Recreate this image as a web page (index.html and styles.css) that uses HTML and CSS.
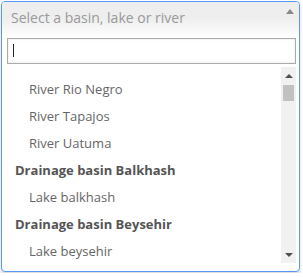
FILE: index.html
```html
<!DOCTYPE html>
<html lang="en">
<head>
    <meta charset="UTF-8">
    <title>Basin select</title>
    <link rel="stylesheet" href="styles.css">
</head>
<body>
    <div class="select">
        <div class="choice">
            <span class="placeholder">Select a basin, lake or river</span>
            <span class="arrow"></span>
        </div>

        <div class="search">
            <input type="text">
            <span class="caret"></span>
        </div>

        <div class="results">
            <ul class="list">
                <li class="item">River Rio Negro</li>
                <li class="item">River Tapajos</li>
                <li class="item">River Uatuma</li>
                <li class="group">Drainage basin Balkhash</li>
                <li class="item">Lake balkhash</li>
                <li class="group">Drainage basin Beysehir</li>
                <li class="item">Lake beysehir</li>
            </ul>

            <div class="scrollbar">
                <span class="btn up"></span>
                <div class="track"><div class="thumb"></div></div>
                <span class="btn down"></span>
            </div>
        </div>
    </div>
</body>
</html>
```

FILE: styles.css
```css
body {
    margin: 0;
    padding: 1px;
    font-family: "Open Sans", Arial, sans-serif;
    background: #fff;
}

.select {
    width: 299px;
    height: 271px;
    box-sizing: border-box;
    border: 1px solid #5897fb;
    border-radius: 4px;
    box-shadow: 0 3px 4px rgba(0, 0, 0, 0.15);
    background: #fff;
    overflow: hidden;
}

.choice {
    display: flex;
    align-items: center;
    justify-content: space-between;
    height: 36px;
    padding: 0 5px 6px 9px;
    box-sizing: border-box;
    background: linear-gradient(to bottom, #eee 0%, #eee 45%, #fff 100%);
}

.placeholder {
    font-size: 14px;
    color: #999;
}

.arrow {
    width: 0;
    height: 0;
    margin-top: -12px;
    border-left: 4px solid transparent;
    border-right: 4px solid transparent;
    border-bottom: 5px solid #888;
}

.search {
    position: relative;
    padding: 0 3px 0 5px;
}

.search input {
    display: block;
    width: 100%;
    height: 26px;
    box-sizing: border-box;
    margin: 0;
    border: 1px solid #aaa;
    border-radius: 0;
    outline: none;
    padding: 0 6px;
    font-family: inherit;
    font-size: 13px;
    background: #fff;
    box-shadow: inset 0 0 2px rgba(0, 0, 0, 0.15);
}

.caret {
    position: absolute;
    left: 11px;
    top: 6px;
    width: 1px;
    height: 13px;
    background: #222;
}

.results {
    display: flex;
    height: 196px;
    margin: 3px 3px 0 0;
    padding-left: 4px;
    overflow: hidden;
}

.list {
    flex: 1;
    margin: 0;
    padding: 9px 0 0;
    list-style: none;
    font-size: 13px;
}

.list li {
    height: 27px;
    line-height: 27px;
    white-space: nowrap;
}

.item {
    padding-left: 23px;
    color: #666;
}

.group {
    padding-left: 9px;
    font-weight: 700;
    color: #555;
}

.scrollbar {
    display: flex;
    flex-direction: column;
    width: 15px;
    background: #f1f1f1;
}

.btn {
    display: flex;
    align-items: center;
    justify-content: center;
    height: 17px;
}

.btn::before {
    content: "";
    border-left: 4px solid transparent;
    border-right: 4px solid transparent;
}

.up::before {
    border-bottom: 4px solid #505050;
}

.down::before {
    border-top: 4px solid #505050;
}

.track {
    flex: 1;
    padding: 1px 2px;
}

.thumb {
    height: 16px;
    background: #c1c1c1;
}
```
